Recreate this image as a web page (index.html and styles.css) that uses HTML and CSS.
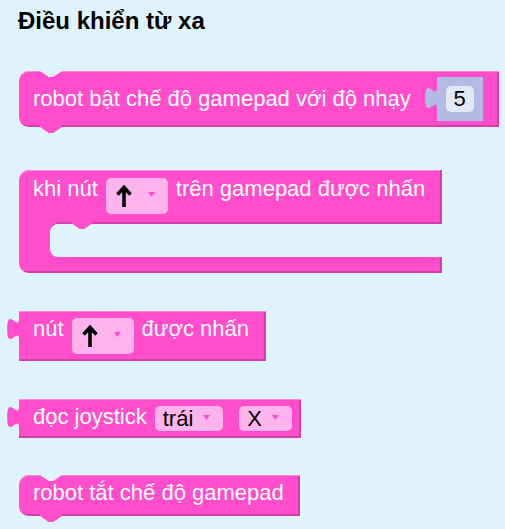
FILE: index.html
```html
<!DOCTYPE html>
<html lang="vi">
<head>
<meta charset="utf-8">
<title>Điều khiển từ xa</title>
<link rel="stylesheet" href="styles.css">
</head>
<body>
<main class="workspace">
  <h1 class="title">Điều khiển từ xa</h1>
  <div class="blocks">

    <div class="block stmt b-enable">
      <svg class="notch" width="22" height="6" viewBox="0 0 22 6"><polygon points="0,0 8.8,6 13.2,6 22,0"/></svg>
      <span class="label">robot bật chế độ gamepad với độ nhạy</span>
      <span class="shadow-slot">
        <svg class="out-tab slot-tab" width="12" height="22" viewBox="0 0 12 22"><path d="M12,0 C12,14.7 0.2,-12.5 0.2,11 C0.2,34.5 12,7.3 12,22 Z"/></svg>
        <span class="num-field">5</span>
      </span>
      <svg class="next-tab" width="22" height="8" viewBox="0 0 22 8"><polygon points="0,0 0,2 8.8,8 13.2,8 22,2 22,0"/></svg>
    </div>

    <div class="cblock">
      <div class="c-top">
        <span class="label">khi nút</span>
        <span class="dropdown tall">
          <svg class="arrow" width="24" height="26" viewBox="0 0 24 26"><path d="M12 24V5 M5.5 11.5 L12 4.5 L18.5 11.5"/></svg>
          <svg class="tri" width="7" height="5" viewBox="0 0 7 5"><polygon points="0,0 7,0 3.5,5"/></svg>
        </span>
        <span class="label">trên gamepad được nhấn</span>
      </div>
      <div class="c-mid">
        <div class="c-hole">
          <svg class="inner-notch" width="22" height="8" viewBox="0 0 22 8"><polygon points="0,0 0,1 8.8,7 13.2,7 22,1 22,0"/></svg>
        </div>
      </div>
      <div class="c-bottom"></div>
    </div>

    <div class="block value b-pressed">
      <svg class="out-tab" width="12" height="22" viewBox="0 0 12 22"><path d="M12,0 C12,14.7 0.2,-12.5 0.2,11 C0.2,34.5 12,7.3 12,22 Z"/></svg>
      <span class="label">nút</span>
      <span class="dropdown tall">
        <svg class="arrow" width="24" height="26" viewBox="0 0 24 26"><path d="M12 24V5 M5.5 11.5 L12 4.5 L18.5 11.5"/></svg>
        <svg class="tri" width="7" height="5" viewBox="0 0 7 5"><polygon points="0,0 7,0 3.5,5"/></svg>
      </span>
      <span class="label">được nhấn</span>
    </div>

    <div class="block value b-joy">
      <svg class="out-tab" width="12" height="22" viewBox="0 0 12 22"><path d="M12,0 C12,14.7 0.2,-12.5 0.2,11 C0.2,34.5 12,7.3 12,22 Z"/></svg>
      <span class="label">đọc joystick</span>
      <span class="dropdown short">
        <span class="ftext">trái</span>
        <svg class="tri" width="7" height="5" viewBox="0 0 7 5"><polygon points="0,0 7,0 3.5,5"/></svg>
      </span>
      <span class="dropdown short second">
        <span class="ftext">X</span>
        <svg class="tri" width="7" height="5" viewBox="0 0 7 5"><polygon points="0,0 7,0 3.5,5"/></svg>
      </span>
    </div>

    <div class="block stmt b-disable">
      <svg class="notch" width="22" height="6" viewBox="0 0 22 6"><polygon points="0,0 8.8,6 13.2,6 22,0"/></svg>
      <span class="label">robot tắt chế độ gamepad</span>
      <svg class="next-tab" width="22" height="8" viewBox="0 0 22 8"><polygon points="0,0 0,2 8.8,8 13.2,8 22,2 22,0"/></svg>
    </div>

  </div>
</main>
</body>
</html>
```

FILE: styles.css
```css
html, body {
  margin: 0;
  padding: 0;
}

body {
  background: #dff3fc;
  font-family: "Liberation Sans", Arial, sans-serif;
  width: 505px;
  height: 529px;
  overflow: hidden;
}

.workspace {
  padding: 7px 0 0 19px;
}

.title {
  margin: 0 0 0 -1px;
  font-size: 24px;
  line-height: 28px;
  font-weight: bold;
  color: #000;
}

.blocks {
  display: flex;
  flex-direction: column;
  align-items: flex-start;
  gap: 38px;
  margin-top: 36px;
}

.block {
  position: relative;
  display: flex;
  align-items: flex-start;
  gap: 8px;
  background: #ff4dcb;
  color: #fff;
  box-shadow: inset 0 1px 0 #ff86dd, inset -2px -2px 0 #d43fb0;
}

.label {
  font-size: 22px;
  line-height: 26px;
  white-space: nowrap;
  margin-top: -2px;
}

/* statement blocks */
.stmt {
  border-radius: 10px 0 0 10px;
}

.notch {
  position: absolute;
  top: 0;
  left: 21px;
  fill: #dff3fc;
}

.next-tab {
  position: absolute;
  top: calc(100% - 2px);
  left: 21px;
  fill: #ff4dcb;
}

.b-enable {
  height: 56px;
  box-sizing: border-box;
  padding: 6px 16px 6px 14px;
  align-items: center;
  gap: 0;
  margin-bottom: 5px;
}

.b-enable .label {
  margin-top: 0;
}

.shadow-slot {
  position: relative;
  display: flex;
  align-items: center;
  justify-content: center;
  width: 46px;
  height: 44px;
  margin-left: 26px;
  background: #b3bbe5;
}

.out-tab {
  position: absolute;
  left: -12px;
  top: 7px;
  overflow: visible;
  fill: #ff4dcb;
}

.slot-tab {
  top: 10px;
  fill: #b3bbe5;
}

.num-field {
  width: 28px;
  height: 26px;
  border-radius: 5px;
  background: #e4e7f5;
  color: #000;
  font-size: 22px;
  line-height: 26px;
  text-align: center;
}

.b-disable {
  height: 41px;
  box-sizing: border-box;
  padding: 7px 16px 0 14px;
  margin-top: -1px;
}

/* value blocks */
.value {
  padding: 7px 17px 7px 14px;
}

.b-joy {
  padding-right: 9px;
}

/* dropdown fields */
.dropdown {
  display: flex;
  align-items: center;
  background: #ffb3ec;
  border-radius: 5px;
  color: #000;
}

.dropdown.tall {
  height: 36px;
  padding: 0 13px 0 6px;
  gap: 12px;
}

.dropdown.short {
  height: 25px;
  padding: 0 13px 0 8px;
  gap: 10px;
}

.dropdown.second {
  margin-left: 8px;
}

.ftext {
  font-size: 22px;
  line-height: 25px;
  margin-top: -1px;
}

.arrow path {
  fill: none;
  stroke: #000;
  stroke-width: 3.6;
}

.tri {
  fill: #ff4dcb;
  margin-top: -3px;
}

/* C-shaped event block */
.cblock {
  display: flex;
  flex-direction: column;
  overflow: hidden;
  background: #ff4dcb;
  border-radius: 10px 0 0 10px;
  color: #fff;
  box-shadow: inset 0 1px 0 #ff86dd;
}

.c-top {
  display: flex;
  align-items: flex-start;
  gap: 8px;
  padding: 8px 17px 8px 14px;
  box-shadow: inset -2px 0 0 #d43fb0;
}

.c-mid {
  height: 35px;
  padding-left: 31px;
}

.c-hole {
  position: relative;
  height: 100%;
  background: #dff3fc;
  border-radius: 8px 0 0 8px;
  box-shadow: inset 0 2px 0 #d43fb0;
}

.inner-notch {
  position: absolute;
  top: 0;
  left: 21px;
  fill: #ff4dcb;
}

.c-bottom {
  height: 16px;
  box-shadow: inset -2px -2px 0 #d43fb0;
}
```
